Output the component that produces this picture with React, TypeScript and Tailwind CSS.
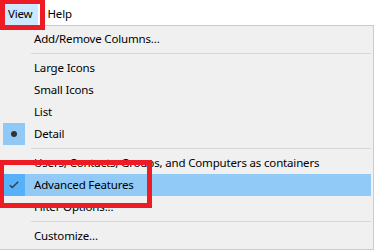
import React from "react";

type Item =
  | { kind: "item"; label: string; mark?: "dot" | "check"; active?: boolean }
  | { kind: "sep" };

const items: Item[] = [
  { kind: "item", label: "Add/Remove Columns..." },
  { kind: "sep" },
  { kind: "item", label: "Large Icons" },
  { kind: "item", label: "Small Icons" },
  { kind: "item", label: "List" },
  { kind: "item", label: "Detail", mark: "dot" },
  { kind: "sep" },
  { kind: "item", label: "Users, Contacts, Groups, and Computers as containers" },
  { kind: "item", label: "Advanced Features", mark: "check", active: true },
  { kind: "item", label: "Filter Options..." },
  { kind: "sep" },
  { kind: "item", label: "Customize..." },
];

export default function App() {
  return (
    <div className="relative w-[374px] h-[250px] bg-white overflow-hidden font-['Segoe_UI','Noto_Sans',sans-serif] text-[11.5px] tracking-[-0.17px] text-black leading-none">
      {/* Menu bar */}
      <div className="flex h-[25px] pl-[2px]">
        <div className="mt-[2px] h-[23px] px-[6px] flex items-center bg-[#cce8ff]">View</div>
        <div className="mt-[2px] h-[23px] ml-[2px] px-[7px] flex items-center">Help</div>
      </div>

      {/* Dropdown */}
      <div className="ml-[-1px] w-[375px] border border-[#cccccc] bg-[#f0f0f0] p-[2px]">
        {items.map((it, i) =>
          it.kind === "sep" ? (
            <div key={i} className="h-[7px] flex items-center">
              <div className="ml-[29px] flex-1 h-px bg-[#d7d7d7]" />
            </div>
          ) : (
            <div
              key={i}
              className={
                "h-[22px] flex items-center " + (it.active ? "bg-[#91c9f7]" : "")
              }
            >
              <div
                className={
                  "ml-[1px] w-[22px] h-[22px] flex items-center justify-center " +
                  (it.mark === "dot"
                    ? "bg-[#90c8f6]"
                    : it.mark === "check"
                    ? "bg-[#56b0fa]"
                    : "")
                }
              >
                {it.mark === "dot" && (
                  <div className="w-[6px] h-[6px] rounded-full bg-[#333333]" />
                )}
                {it.mark === "check" && (
                  <svg width="10" height="8" viewBox="0 0 10 8">
                    <path
                      d="M0.8 4.2 L3.3 6.6 L9.2 0.8"
                      fill="none"
                      stroke="#3c3c3c"
                      strokeWidth="1.4"
                    />
                  </svg>
                )}
              </div>
              <span className="ml-[9px] mb-[1px] whitespace-nowrap">{it.label}</span>
            </div>
          )
        )}
      </div>

      {/* Red annotation rectangles */}
      <div className="absolute left-0 top-[-1px] w-[45px] h-[31px] border-[5px] border-[#ed1c24]" />
      <div className="absolute left-[-1px] top-[160px] w-[153px] h-[48px] border-[5px] border-[#ed1c24]" />
    </div>
  );
}
